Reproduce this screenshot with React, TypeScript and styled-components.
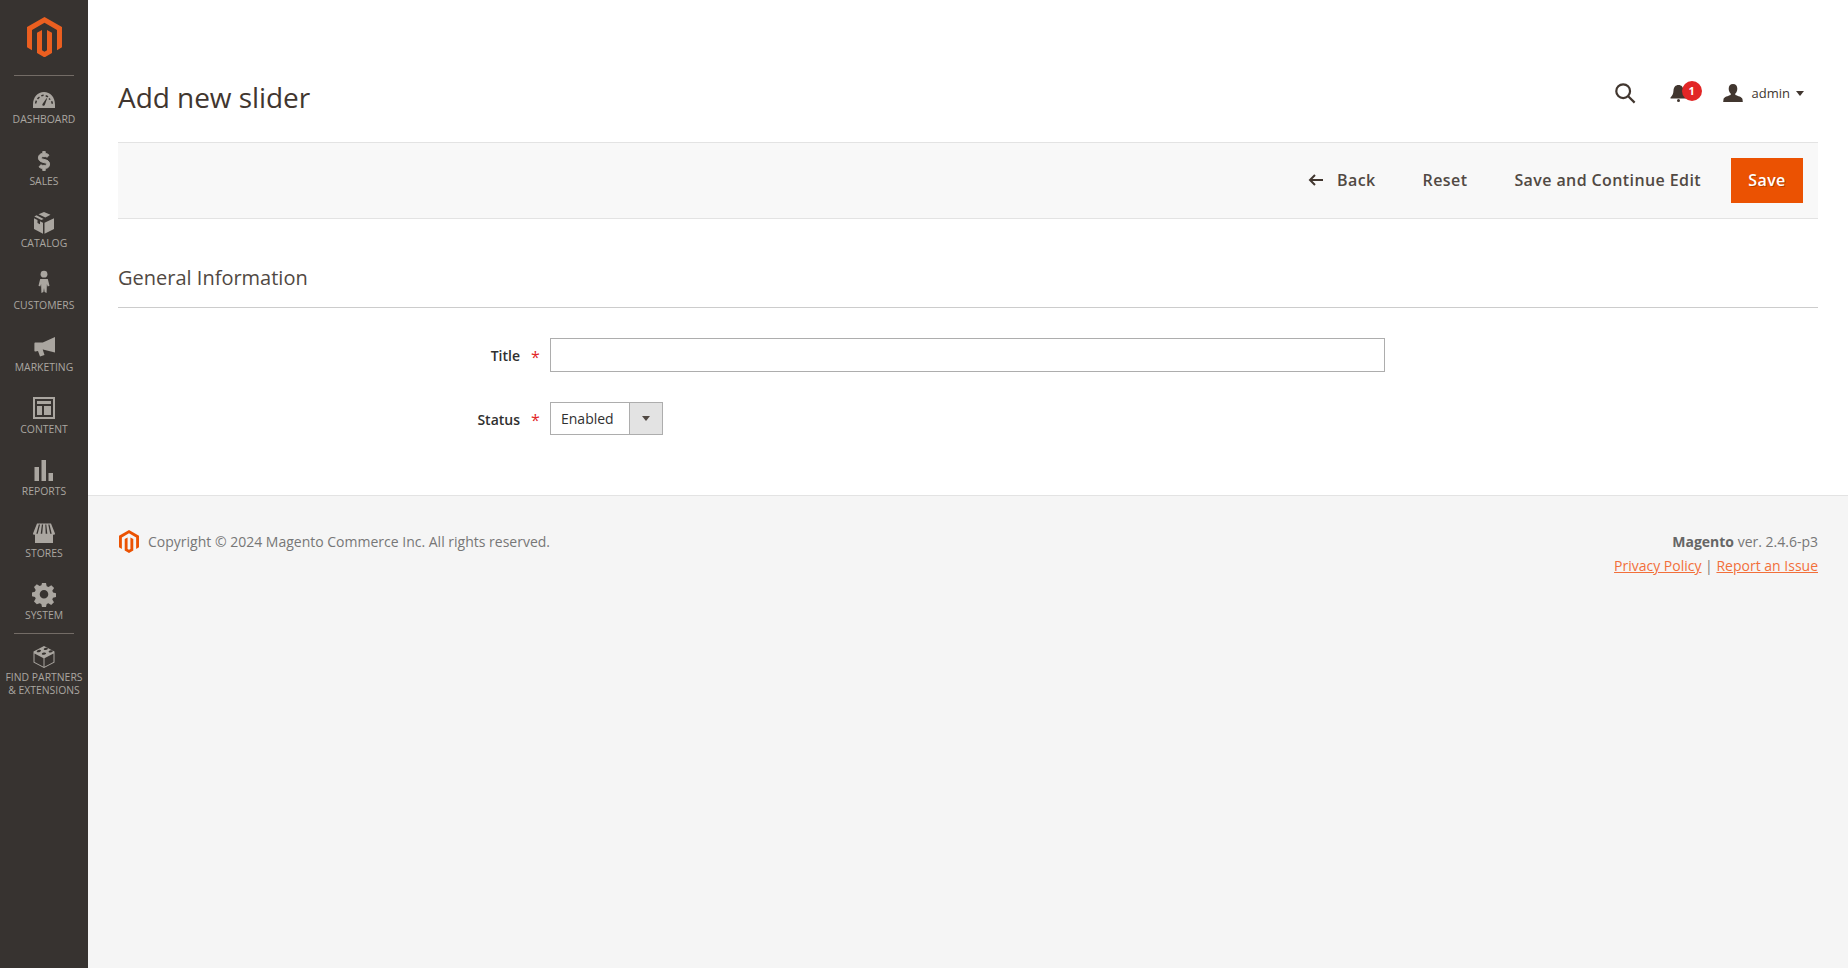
import React from 'react';
import styled, { createGlobalStyle } from 'styled-components';
import { FaDollarSign } from 'react-icons/fa';

const GlobalStyle = createGlobalStyle`
	html, body {
		margin: 0;
		padding: 0;
		height: 100%;
		background: #f5f5f5;
		font-family: "Open Sans", "Liberation Sans", sans-serif;
		color: #303030;
	}
	* {
		box-sizing: border-box;
	}
`;

const ICONS: Record<string, React.ReactNode> = {
	dashboard: (
		<path
			transform="translate(0 2)"
			d="M12 3C5.600 3 1 8.200 1 15.500V19h22v-3.500C23 8.200 18.400 3 12 3zm-7.600 11.400H2.900c.1-1.100.4-2.200.9-3.200l1.300.7c-.4.800-.6 1.600-.7 2.500zm1.700-3.900-1.200-.9c.6-.8 1.300-1.600 2.200-2.100l.8 1.300c-.7.4-1.300 1-1.800 1.700zm3.500-2.900L9 6.200c.8-.3 1.700-.5 2.600-.6v1.500c-.7.100-1.400.3-2 .5zm3.900-.1.400-1.400c.9.200 1.700.6 2.500 1.100l-.8 1.300c-.7-.4-1.400-.8-2.100-1zm-1.900 9.300c-1 0-1.600-1-1.100-1.900l4-5.700.6.300-2.300 6.500c-.2.500-.7.800-1.200.8zm5.900-5.800c-.3-.4-.6-.7-1-1l1-1.100c.5.400.9.900 1.300 1.400zm2 3.800c-.1-.8-.3-1.500-.6-2.200l1.400-.6c.4.900.7 1.800.7 2.800z"
		/>
	),
	catalog: (
		<path d="M12 1 6.500 3.300l6.800 3.300 5.200-2.900zM4.500 4.200 2.300 5.500 9.300 9l2.400-1.100zM2 7.200v10.700l9 4.900V11.700l-3-1.500v3.100l-2.500-1.400V9zm20 0-9.500 4.500v11.100l9.500-4.900z" />
	),
	customers: (
		<g transform="translate(0 -3)">
			<circle cx="12" cy="4.200" r="3.400" />
			<path d="M8.200 9h7.600l1.700 6.700-1.800.9-.8-2.600-.3 9-2-.9-.6-4-.6 4-2 .9-.3-9-.8 2.600-1.800-.9z" />
		</g>
	),
	marketing: <path d="M23 2v15.500L11 14.500l-.3.100 1.800 5.300-4.500 1.500-2-5.500-2.600.6c-.6 0-1-.4-1-1V8.500c0-.5.400-1 1-1h7.400z" />,
	content: (
		<path
			transform="translate(0 -1)"
			fillRule="evenodd"
			d="M1 1h22v22H1zm2 2v18h18V3zm2 2h14v3H5zm0 5h5v9H5zm7 0h7v9h-7z"
		/>
	),
	reports: <path d="M2.500 8H7v14H2.500zM9.500 1h4.500v21H9.500zM16.500 14H21v8h-4.500z" />,
	stores: (
		<path d="M1 12.500 5 2.500h14l4 10c0 1.100-1.200 1.600-2 1v8.500H3v-8.500c-.8.600-2 .100-2-1zm5.800-9L4.300 12.700h1.400l2.400-9.200zm3.100 0-1.200 9.200h1.500l.9-9.200zm3.400 0 .4 9.200h1.600l-1-9.200zm3 0 1.900 9.200h1.500l-2.200-9.200z" />
	),
	system: (
		<path
			transform="translate(0 -1)"
			fillRule="evenodd"
			d="M10 1h4l.7 3.200 1.800.8 2.800-1.800 2.800 2.800L20.300 8.800l.8 1.800 2.900.6v3.800l-3 .7-.7 1.700 1.700 2.800-2.800 2.800-2.800-1.700-1.700.7-.7 3h-4l-.7-3-1.700-.7L4.800 22.200 2 19.400l1.700-2.800L3 14.900 0 14.200v-3.800l2.900-.6.800-1.800L2 5l2.800-2.800L7.600 4l1.800-.8zM12 8a4.300 4.300 0 1 0 0 8.600A4.300 4.300 0 0 0 12 8z"
		/>
	),
	partners: (
		<path d="M12 1 1.500 6.500v11L12 23l10.500-5.500v-11zM6 5.200c1.200-.6 2.600-.6 3 .1.300.5-.2 1.200-1.200 1.600-1.200.5-2.600.4-3-.2-.3-.5.200-1.100 1.200-1.500zm5 2.500c1.200-.5 2.600-.4 3 .2.300.5-.2 1.100-1.200 1.500-1.200.5-2.500.4-2.900-.2-.3-.5.100-1.100 1.100-1.500zm2-4.700c1.100-.5 2.400-.4 2.800.2.300.5-.2 1.100-1.200 1.500-1.100.5-2.400.4-2.800-.2-.3-.5.200-1.100 1.200-1.500zm4.900 2.500c1.100-.5 2.400-.4 2.800.2.300.5-.2 1.100-1.200 1.500-1.100.5-2.400.4-2.800-.2-.3-.500.200-1.100 1.200-1.500zM2.500 8.500l9 4.700v8.500l-9-4.800zm10 4.700 9-4.700v8.400l-9 4.800z" />
	),
};

const MENU_ITEMS = ['dashboard', 'sales', 'catalog', 'customers', 'marketing', 'content', 'reports', 'stores', 'system'];

function MagentoLogo({ width, color }: { width: number; color: string }) {
	return (
		<svg width={width} height={width * 1.154} viewBox="1.600 0 20.800 24">
			<path
				fill={color}
				d="M12 24l-4.455-2.572v-12l2.970-1.715v12.001l1.485.902 1.485-.902V7.713l2.970 1.715v12L12 24zM22.391 6v12l-2.969 1.714V7.713L12 3.430 4.574 7.713v12.001L1.609 18V6L12 0l10.391 6z"
			/>
		</svg>
	);
}

function App() {
	return (
		<Page>
			<GlobalStyle />
			<Sidebar>
				<LogoLink>
					<MagentoLogo width={35} color="#eb5f20" />
				</LogoLink>
				<MenuList>
					{MENU_ITEMS.map((item) => (
						<MenuItem key={item}>
							{item === 'sales' ? (
								<DollarIcon />
							) : (
								<MenuIcon viewBox="0 0 24 24">{ICONS[item]}</MenuIcon>
							)}
							<span>{item.toUpperCase()}</span>
						</MenuItem>
					))}
				</MenuList>
				<PartnersItem>
					<MenuIcon viewBox="0 0 24 24">{ICONS.partners}</MenuIcon>
					<span>
						FIND PARTNERS
						<br />& EXTENSIONS
					</span>
				</PartnersItem>
			</Sidebar>
			<Main>
				<Content>
					<Header>
						<PageTitle>Add new slider</PageTitle>
						<HeaderActions>
							<SearchIcon viewBox="0 0 24 24">
								<circle cx="10" cy="10" r="7.500" />
								<path d="m15.500 15.500 7 7" />
							</SearchIcon>
							<Notifications>
								<svg width="17" height="18" viewBox="0 0 17 18" fill="#41362f">
									<path d="M8.500 1C5.500 1 3.700 3.200 3.500 6.500 3.300 10 2.500 11.500.5 13.500v1h16v-1c-2-2-2.800-3.500-3-7C13.300 3.200 11.500 1 8.500 1z" />
									<circle cx="8.500" cy="16.500" r="1.500" />
								</svg>
								<Badge>1</Badge>
							</Notifications>
							<UserMenu>
								<svg width="20" height="18" viewBox="0 0 20 18" fill="#41362f">
									<path d="M10 0c2.800 0 4.300 2 4.300 4.700 0 2-.8 3.800-2 4.800v1.500c2.500 1 6.700 1.800 7.200 4.200L19.800 18H.2l.3-2.800C1 12.800 5.200 12 7.700 11V9.500c-1.200-1-2-2.800-2-4.800C5.700 2 7.200 0 10 0z" />
								</svg>
								<UserName>admin</UserName>
								<Caret />
							</UserMenu>
						</HeaderActions>
					</Header>
					<Toolbar>
						<ToolbarButton>
							<svg width="16" height="12" viewBox="0 0 16 12" fill="none" stroke="#41362f" strokeWidth="2">
								<path d="M15 6H2M7 1 2 6l5 5" />
							</svg>
							<BackLabel>Back</BackLabel>
						</ToolbarButton>
						<ToolbarButton>Reset</ToolbarButton>
						<ToolbarButton>Save and Continue Edit</ToolbarButton>
						<SaveButton>Save</SaveButton>
					</Toolbar>
					<SectionTitle>General Information</SectionTitle>
					<FormRow>
						<FieldLabel $top={1}>Title</FieldLabel>
						<Required>*</Required>
						<TextInput type="text" />
					</FormRow>
					<FormRow $gap={30}>
						<FieldLabel $top={2}>Status</FieldLabel>
						<Required>*</Required>
						<SelectBox>
							<SelectValue>Enabled</SelectValue>
							<SelectArrow />
						</SelectBox>
					</FormRow>
				</Content>
				<Footer>
					<FooterLeft>
						<MagentoLogo width={20} color="#eb5202" />
						<span>Copyright © 2024 Magento Commerce Inc. All rights reserved.</span>
					</FooterLeft>
					<FooterRight>
						<div>
							<strong>Magento</strong> ver. 2.4.6-p3
						</div>
						<FooterLinks>
							<a href="#privacy">Privacy Policy</a> | <a href="#issue">Report an Issue</a>
						</FooterLinks>
					</FooterRight>
				</Footer>
			</Main>
		</Page>
	);
}

const Page = styled.div`
	display: flex;
	min-height: 968px;
`;

const Sidebar = styled.aside`
	width: 88px;
	flex-shrink: 0;
	background: #373330;
	display: flex;
	flex-direction: column;
	align-items: center;
`;

const LogoLink = styled.div`
	height: 76px;
	width: 60px;
	padding-top: 17px;
	display: flex;
	justify-content: center;
	border-bottom: 1px solid #736c66;
`;

const MenuList = styled.div`
	width: 60px;
	height: 558px;
	display: flex;
	flex-direction: column;
	align-items: center;
	border-bottom: 1px solid #736c66;
`;

const MenuItem = styled.div`
	width: 88px;
	height: 62px;
	flex-shrink: 0;
	padding-top: 11px;
	display: flex;
	flex-direction: column;
	align-items: center;
	font-size: 10.4px;
	line-height: 13px;
	color: #aaa6a0;
	text-align: center;
	span {
		margin-top: 2px;
	}
`;

const PartnersItem = styled(MenuItem)`
	height: 70px;
`;

const MenuIcon = styled.svg`
	width: 24px;
	height: 24px;
	fill: #aaa6a0;
	overflow: visible;
`;

const DollarIcon = styled(FaDollarSign)`
	width: 24px;
	height: 24px;
	padding: 2px 0;
	color: #aaa6a0;
	stroke: currentColor;
	stroke-width: 24px;
`;

const Main = styled.main`
	flex: 1;
	min-width: 0;
	display: flex;
	flex-direction: column;
`;

const Content = styled.div`
	background: #fff;
	height: 496px;
	padding: 0 30px;
	border-bottom: 1px solid #e3e3e3;
`;

const Header = styled.header`
	height: 142px;
	padding-top: 75px;
	display: flex;
	justify-content: space-between;
	align-items: flex-start;
`;

const PageTitle = styled.h1`
	margin: 0;
	font-size: 28px;
	line-height: 44px;
	font-weight: 400;
	letter-spacing: -0.05px;
	color: #41362f;
`;

const HeaderActions = styled.div`
	display: flex;
	align-items: center;
	height: 32px;
	margin-top: 2px;
`;

const SearchIcon = styled.svg`
	width: 22px;
	height: 22px;
	fill: none;
	stroke: #41362f;
	stroke-width: 2.400;
`;

const Notifications = styled.div`
	position: relative;
	margin-left: 34px;
	width: 30px;
	height: 20px;
	display: flex;
	align-items: center;
`;

const Badge = styled.span`
	position: absolute;
	left: 12px;
	top: -2px;
	width: 20px;
	height: 20px;
	border-radius: 50%;
	background: #e22626;
	color: #fff;
	font-size: 11px;
	font-weight: 700;
	line-height: 20px;
	text-align: center;
`;

const UserMenu = styled.div`
	display: flex;
	align-items: center;
	margin-left: 23px;
	margin-right: 14px;
`;

const UserName = styled.span`
	margin-left: 9px;
	font-size: 13px;
	color: #41362f;
`;

const Caret = styled.span`
	margin-left: 6px;
	border: 4.500px solid transparent;
	border-top: 5px solid #41362f;
	border-bottom: 0;
`;

const Toolbar = styled.div`
	height: 77px;
	background: #f8f8f8;
	border-top: 1px solid #e3e3e3;
	border-bottom: 1px solid #e3e3e3;
	display: flex;
	justify-content: flex-end;
	align-items: center;
	padding-right: 15px;
`;

const ToolbarButton = styled.button`
	background: none;
	border: 0;
	padding: 0 0 2px;
	margin-right: 30px;
	margin-left: 17px;
	display: flex;
	align-items: center;
	font: 600 16px "Open Sans", sans-serif;
	letter-spacing: 0.4px;
	color: #514943;
`;

const BackLabel = styled.span`
	margin-left: 13px;
`;

const SaveButton = styled.button`
	width: 72px;
	height: 45px;
	padding: 0 0 2px;
	background: #eb5202;
	border: 0;
	color: #fff;
	font: 600 16px "Open Sans", sans-serif;
	letter-spacing: 0.4px;
	text-shadow: 1px 1px 0 rgba(0, 0, 0, 0.25);
`;

const SectionTitle = styled.h2`
	margin: 0 0 30px;
	height: 89px;
	padding-top: 45px;
	font-size: 20px;
	line-height: 28px;
	font-weight: 400;
	color: #514943;
	border-bottom: 1px solid #cccccc;
`;

const FormRow = styled.div<{ $gap?: number }>`
	display: flex;
	align-items: center;
	margin-top: ${(p) => p.$gap ?? 0}px;
`;

const FieldLabel = styled.label<{ $top: number }>`
	width: 402px;
	padding-top: ${(p) => p.$top}px;
	text-align: right;
	font-size: 14px;
	font-weight: 600;
	color: #303030;
`;

const Required = styled.span`
	width: 30px;
	padding: 3px 0 0 11px;
	color: #e22626;
	font-size: 16px;
	font-weight: 400;
`;

const TextInput = styled.input`
	width: 835px;
	height: 34px;
	border: 1px solid #adadad;
	background: #fff;
	outline: none;
`;

const SelectBox = styled.div`
	width: 113px;
	height: 33px;
	border: 1px solid #adadad;
	background: #fff;
	display: flex;
`;

const SelectValue = styled.span`
	flex: 1;
	padding-left: 10px;
	font-size: 14px;
	line-height: 31px;
	color: #303030;
`;

const SelectArrow = styled.span`
	width: 33px;
	background: #e3e3e3;
	border-left: 1px solid #adadad;
	display: flex;
	align-items: center;
	justify-content: center;
	&::after {
		content: '';
		border: 4px solid transparent;
		border-top: 5px solid #514943;
		border-bottom: 0;
	}
`;

const Footer = styled.footer`
	flex: 1;
	background: #f5f5f5;
	padding: 34px 30px 0;
	display: flex;
	justify-content: space-between;
	align-items: flex-start;
	font-size: 14px;
	line-height: 24px;
	color: #777;
`;

const FooterLeft = styled.div`
	display: flex;
	align-items: center;
	gap: 9px;
	padding-left: 1px;
`;

const FooterRight = styled.div`
	text-align: right;
	strong {
		color: #666;
	}
`;

const FooterLinks = styled.div`
	a {
		color: #f26f3a;
	}
`;

export default App;
